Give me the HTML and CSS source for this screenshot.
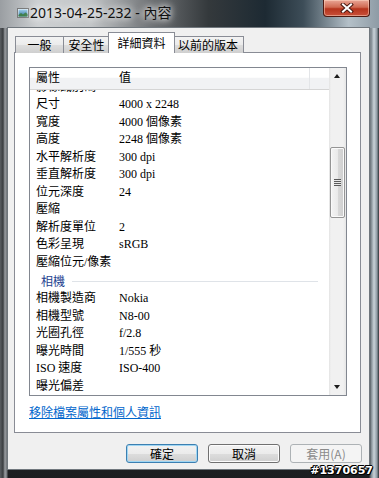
FILE: index.html
```html
<!DOCTYPE html>
<html lang="zh-Hant">

<head>
    <meta charset="UTF-8">
    <title>2013-04-25-232 - 內容</title>
    <link rel="stylesheet" href="styles.css">
</head>

<body>
    <div class="window">
        <div class="titlebar">
            <svg class="app-icon" width="12" height="10" viewBox="0 0 12 10">
                <defs>
                    <linearGradient id="sky" x1="0" y1="0" x2="0" y2="1">
                        <stop offset="0" stop-color="#9fd0ee"/>
                        <stop offset="1" stop-color="#2d6f98"/>
                    </linearGradient>
                </defs>
                <rect x="0.5" y="0.5" width="11" height="9" fill="#f4f4f4" stroke="#7a7a7a"/>
                <rect x="1.5" y="1.5" width="9" height="7" fill="url(#sky)"/>
                <path d="M1.5 7 L4 5 L6 6.5 L8.5 4.5 L10.5 6 L10.5 8.5 L1.5 8.5 Z" fill="#3f7f4a"/>
            </svg>
            <span class="title">2013-04-25-232 - 內容</span>
            <div class="close">
                <svg width="14" height="10" viewBox="0 0 14 10">
                    <path d="M3 1.5 L11 8.5 M11 1.5 L3 8.5" stroke="#4a1a12" stroke-width="4" stroke-linecap="square"/>
                    <path d="M3 1.5 L11 8.5 M11 1.5 L3 8.5" stroke="#ffffff" stroke-width="2" stroke-linecap="square"/>
                </svg>
            </div>
        </div>

        <div class="client">
            <div class="tabs">
                <div class="tab tab-general">一般</div>
                <div class="tab tab-security">安全性</div>
                <div class="tab tab-details active">詳細資料</div>
                <div class="tab tab-previous">以前的版本</div>
            </div>

            <div class="panel">
                <div class="list">
                    <div class="list-main">
                        <div class="list-head">
                            <span class="col-name">屬性</span>
                            <span class="col-val">值</span>
                            <span class="col-rest"></span>
                        </div>
                        <div class="list-body">
                            <div class="rows">
                                <div class="row"><span class="name">影像識別碼</span><span class="val"></span></div>
                                <div class="row"><span class="name">尺寸</span><span class="val">4000 x 2248</span></div>
                                <div class="row"><span class="name">寬度</span><span class="val">4000 個像素</span></div>
                                <div class="row"><span class="name">高度</span><span class="val">2248 個像素</span></div>
                                <div class="row"><span class="name">水平解析度</span><span class="val">300 dpi</span></div>
                                <div class="row"><span class="name">垂直解析度</span><span class="val">300 dpi</span></div>
                                <div class="row"><span class="name">位元深度</span><span class="val">24</span></div>
                                <div class="row"><span class="name">壓縮</span><span class="val"></span></div>
                                <div class="row"><span class="name">解析度單位</span><span class="val">2</span></div>
                                <div class="row"><span class="name">色彩呈現</span><span class="val">sRGB</span></div>
                                <div class="row"><span class="name">壓縮位元/像素</span><span class="val"></span></div>
                                <div class="group"><span class="group-name">相機</span><span class="group-line"></span></div>
                                <div class="row"><span class="name">相機製造商</span><span class="val">Nokia</span></div>
                                <div class="row"><span class="name">相機型號</span><span class="val">N8-00</span></div>
                                <div class="row"><span class="name">光圈孔徑</span><span class="val">f/2.8</span></div>
                                <div class="row"><span class="name">曝光時間</span><span class="val">1/555 秒</span></div>
                                <div class="row"><span class="name">ISO 速度</span><span class="val">ISO-400</span></div>
                                <div class="row"><span class="name">曝光偏差</span><span class="val"></span></div>
                            </div>
                        </div>
                    </div>
                    <div class="scrollbar">
                        <div class="arrow up"></div>
                        <div class="track">
                            <div class="thumb"><span class="grip"></span></div>
                        </div>
                        <div class="arrow down"></div>
                    </div>
                </div>
                <a class="remove-link" href="#">移除檔案屬性和個人資訊</a>
            </div>

            <div class="buttons">
                <button class="btn default">確定</button>
                <button class="btn">取消</button>
                <button class="btn" disabled>套用(A)</button>
            </div>
        </div>

        <div class="watermark">#1370657</div>
    </div>
</body>

</html>
```

FILE: styles.css
```css
* {
    box-sizing: border-box;
}

body {
    margin: 0;
    width: 379px;
    height: 478px;
    overflow: hidden;
    font-family: "Noto Sans CJK TC", sans-serif;
    font-size: 12px;
}

.window {
    position: relative;
    width: 379px;
    height: 478px;
    padding-left: 8px;
    background:
        linear-gradient(90deg, #5a5e62 0, #3a3d40 3px, #9a9ea2 5px, #6e7276 7px, transparent 8px),
        linear-gradient(270deg, #2a2e31 0, #8e9aa3 2px, #c9d2d8 5px, #7c868d 8px, transparent 10px),
        linear-gradient(180deg, #a4a7aa 0, #6c7074 20%, #3c3f42 60%, #1c1e20 100%);
}

/* title bar */
.titlebar {
    display: flex;
    align-items: flex-start;
    height: 28px;
    margin-left: -8px;
    padding: 0 9px 0 17px;
    background: linear-gradient(90deg, #9a9ea2 0, #cdd0d2 10%, #c2c5c7 24%, #6e7174 40%, #34393c 55%, #1d2a33 70%, #3d4d58 80%, #b4c0c8 92%, #8e9ba5 100%);
}

.app-icon {
    margin-top: 8px;
    flex-shrink: 0;
}

.title {
    margin: 4px 0 0 1px;
    font-family: "Noto Sans", "Noto Sans CJK TC", sans-serif;
    font-size: 14px;
    line-height: 18px;
    color: #111;
    text-shadow: 0 0 6px #fff, 0 0 10px #fff;
}

.close {
    margin-left: auto;
    width: 47px;
    height: 17px;
    display: flex;
    align-items: center;
    justify-content: center;
    border: 1px solid #4e1a12;
    border-top: none;
    border-radius: 0 0 4px 4px;
    background: linear-gradient(#e9a796 0, #d06a52 45%, #b5341c 55%, #c9503a 100%);
    box-shadow: inset 0 0 0 1px rgba(255, 220, 200, 0.5);
}

/* client area */
.client {
    width: 361px;
    height: 441px;
    padding: 4px 0 0 6px;
    background-color: #f0f0f0;
    box-shadow: 0 0 0 1px #70777d;
}

.tabs {
    display: flex;
    align-items: flex-end;
    height: 21px;
    padding-left: 1px;
    position: relative;
    z-index: 1;
}

.tab {
    height: 17px;
    line-height: 15px;
    text-align: center;
    border: 1px solid #898c95;
    border-bottom: none;
    background: linear-gradient(#f3f3f3 0, #ebebeb 50%, #dddddd 51%, #cfcfcf 100%);
    color: #000;
}

.tab + .tab {
    border-left: none;
}

.tab-general {
    width: 49px;
}

.tab-security {
    width: 46px;
}

.tab-details {
    width: 63px;
}

.tab-previous {
    width: 71px;
}

.tab.active {
    height: 21px;
    line-height: 19px;
    width: 67px;
    margin: 0 -2px;
    border-left: 1px solid #898c95;
    background: #fff;
    position: relative;
    z-index: 2;
}

.tab.active + .tab {
    border-left: none;
}

.panel {
    width: 347px;
    height: 381px;
    margin-top: -1px;
    padding: 14px 14px 0;
    border: 1px solid #898c95;
    background-color: #fff;
}

/* property list */
.list {
    display: flex;
    width: 318px;
    height: 329px;
    border: 1px solid #828790;
    background-color: #fff;
    font-family: "Liberation Serif", "Noto Sans CJK TC", serif;
}

.list-main {
    width: 299px;
    display: flex;
    flex-direction: column;
}

.list-head {
    display: flex;
    height: 22px;
    border-bottom: 1px solid #d5d5d5;
    background: linear-gradient(#ffffff 0, #ffffff 45%, #f1f2f4 46%, #f1f2f4 100%);
    line-height: 21px;
    position: relative;
    z-index: 1;
}

.col-name {
    width: 89px;
    padding-left: 6px;
}

.col-val {
    width: 191px;
    border-right: 1px solid #e3e5e8;
}

.list-body {
    flex: 1;
    overflow: hidden;
}

.rows {
    margin-top: -11.25px;
}

.row {
    display: flex;
    height: 17.5px;
    line-height: 17.5px;
    white-space: nowrap;
}

.row .name {
    width: 89px;
    padding-left: 6px;
}

.group {
    display: flex;
    align-items: center;
    height: 19px;
    padding: 0 11px;
}

.group-name {
    color: #1e3f8f;
    font-family: "Noto Sans CJK TC", sans-serif;
}

.group-line {
    flex: 1;
    height: 1px;
    margin: 2px 0 0 7px;
    background-color: #dfe3e8;
}

/* scrollbar */
.scrollbar {
    width: 17px;
    display: flex;
    flex-direction: column;
    background: linear-gradient(90deg, #e3e3e3 0, #f1f1f1 2px, #f1f1f1 14px, #e6e6e6 100%);
}

.arrow {
    height: 17px;
    position: relative;
}

.arrow::after {
    content: "";
    position: absolute;
    left: 5px;
    width: 0;
    height: 0;
    border-left: 3.5px solid transparent;
    border-right: 3.5px solid transparent;
}

.arrow.up::after {
    top: 6px;
    border-bottom: 4px solid #1c1c1c;
}

.arrow.down::after {
    top: 7px;
    border-top: 4px solid #1c1c1c;
}

.track {
    flex: 1;
    padding-top: 62px;
}

.thumb {
    width: 15px;
    height: 71px;
    margin-left: 1px;
    border: 1px solid #959595;
    border-radius: 2px;
    background: linear-gradient(90deg, #f4f4f4 0, #eaeaea 50%, #d9d9d9 51%, #cfcfcf 100%);
    box-shadow: inset 0 0 0 1px #fafafa;
    display: flex;
    align-items: center;
    justify-content: center;
}

.grip {
    width: 7px;
    height: 7px;
    background: repeating-linear-gradient(#5a5a5a 0, #5a5a5a 1px, #e8e8e8 1px, #e8e8e8 2px);
}

.remove-link {
    display: inline-block;
    margin-top: 9px;
    line-height: 14px;
    color: #0066cc;
    text-decoration: underline;
}

/* dialog buttons */
.buttons {
    display: flex;
    justify-content: flex-end;
    gap: 10px;
    margin-top: 11px;
    padding-right: 7px;
}

.btn {
    width: 72px;
    height: 19px;
    padding: 0;
    font-family: "Noto Sans CJK TC", sans-serif;
    font-size: 12px;
    line-height: 17px;
    color: #000;
    border: 1px solid #707070;
    border-radius: 3px;
    background: linear-gradient(#f2f2f2 0, #ebebeb 50%, #dddddd 51%, #cfcfcf 100%);
    box-shadow: inset 0 0 0 1px #fcfcfc;
}

.btn.default {
    border-color: #3c7fb1;
    box-shadow: inset 0 0 0 1px #9fd6f3;
}

.btn:disabled {
    color: #8a8a8a;
    border-color: #adb2b5;
    background: #f4f4f4;
    box-shadow: none;
}

.watermark {
    position: absolute;
    right: 6px;
    bottom: 1px;
    font-family: "DejaVu Sans", sans-serif;
    font-size: 11px;
    font-weight: bold;
    line-height: 12px;
    color: #fff;
    text-shadow: 1px 0 0 #000, -1px 0 0 #000, 0 1px 0 #000, 0 -1px 0 #000, 1px 1px 0 #000, -1px -1px 0 #000;
}
```
